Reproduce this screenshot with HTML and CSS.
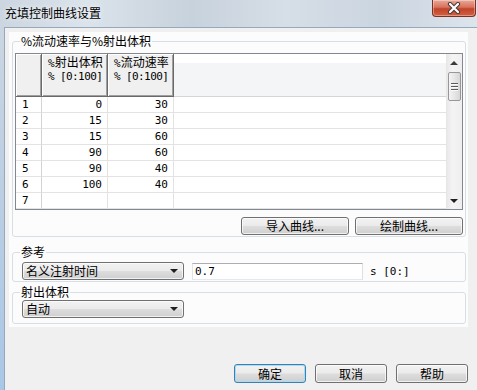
FILE: index.html
```html
<!DOCTYPE html>
<html lang="zh-CN">
<head>
    <meta charset="UTF-8">
    <title>充填控制曲线设置</title>
    <link rel="stylesheet" href="styles.css">
</head>
<body>
    <div class="window">
        <div class="titlebar">
            <span class="title">充填控制曲线设置</span>
            <div class="close">
                <svg width="14" height="12" viewBox="0 0 14 12">
                    <path d="M3 2 L11 10 M11 2 L3 10" stroke="#4a3a38" stroke-width="4.2" stroke-linecap="round"/>
                    <path d="M3 2 L11 10 M11 2 L3 10" stroke="#fff" stroke-width="2.2" stroke-linecap="round"/>
                </svg>
            </div>
        </div>

        <div class="client">
            <div class="panel">
                <fieldset class="group">
                    <legend>%流动速率与%射出体积</legend>
                    <div class="curve-body">
                        <div class="grid-box">
                            <div class="grid">
                                <div class="hdr"></div>
                                <div class="hdr"><span class="hl"><span class="mono">%</span>射出体积</span><span class="hl mono tight">% [0:100]</span></div>
                                <div class="hdr"><span class="hl"><span class="mono">%</span>流动速率</span><span class="hl mono tight">% [0:100]</span></div>
                                <div class="hdr-fill"></div>

                                <div class="cell idx">1</div><div class="cell num">0</div><div class="cell num">30</div><div class="fill"></div>
                                <div class="cell idx">2</div><div class="cell num">15</div><div class="cell num">30</div><div class="fill"></div>
                                <div class="cell idx">3</div><div class="cell num">15</div><div class="cell num">60</div><div class="fill"></div>
                                <div class="cell idx">4</div><div class="cell num">90</div><div class="cell num">60</div><div class="fill"></div>
                                <div class="cell idx">5</div><div class="cell num">90</div><div class="cell num">40</div><div class="fill"></div>
                                <div class="cell idx">6</div><div class="cell num">100</div><div class="cell num">40</div><div class="fill"></div>
                                <div class="cell idx">7</div><div class="cell num"></div><div class="cell num"></div><div class="fill"></div>
                            </div>
                            <div class="vscroll">
                                <div class="sb-btn"><span class="arrow-up"></span></div>
                                <div class="sb-track">
                                    <div class="thumb"><span class="grip"></span></div>
                                </div>
                                <div class="sb-btn"><span class="arrow-down"></span></div>
                            </div>
                        </div>
                        <div class="curve-actions">
                            <button class="btn btn-wide">导入曲线...</button>
                            <button class="btn btn-wide">绘制曲线...</button>
                        </div>
                    </div>
                </fieldset>

                <fieldset class="group group-ref">
                    <legend>参考</legend>
                    <div class="row ref-body">
                        <div class="combo"><span>名义注射时间</span><span class="arrow-down"></span></div>
                        <div class="edit mono">0.7</div>
                        <span class="unit mono">s [0:]</span>
                    </div>
                </fieldset>

                <fieldset class="group group-vol">
                    <legend>射出体积</legend>
                    <div class="row vol-body">
                        <div class="combo"><span>自动</span><span class="arrow-down"></span></div>
                    </div>
                </fieldset>
            </div>

            <div class="actions">
                <button class="btn btn-dlg default">确定</button>
                <button class="btn btn-dlg">取消</button>
                <button class="btn btn-dlg">帮助</button>
            </div>
        </div>
    </div>
</body>
</html>
```

FILE: styles.css
```css
* {
    box-sizing: border-box;
}

body {
    margin: 0;
    width: 477px;
    height: 390px;
    overflow: hidden;
    font-family: "Noto Sans CJK SC", "DejaVu Sans", sans-serif;
    font-size: 12px;
    color: #000;
}

.mono {
    font-family: "DejaVu Sans Mono", "Noto Sans CJK SC", monospace;
    font-size: 11px;
}

.window {
    width: 477px;
    height: 390px;
    display: flex;
    flex-direction: column;
    background: linear-gradient(180deg, #cdd7e1 0%, #bfd0e2 40%, #a9c7e7 100%);
}

/* title bar (glass) */
.titlebar {
    height: 27px;
    flex: none;
    display: flex;
    justify-content: space-between;
    align-items: flex-start;
    background: linear-gradient(90deg, #ccd6e0 0%, #dbe3eb 18%, #c8d2dc 40%, #d6dee7 60%, #cbd5e0 80%, #dce4ec 100%);
}

.title {
    padding: 5px 0 0 5px;
    line-height: 16px;
    text-shadow: 0 0 5px #fff;
}

.close {
    width: 44px;
    height: 17px;
    margin-right: 1px;
    display: flex;
    align-items: center;
    justify-content: center;
    border: 1px solid #7e2f22;
    border-top: none;
    border-radius: 0 0 4px 4px;
    background: linear-gradient(#e9a999 0%, #d7725c 45%, #c3432b 55%, #d0603f 100%);
    box-shadow: inset 0 0 0 1px rgba(255, 255, 255, 0.35);
}

/* client area */
.client {
    flex: 1;
    margin-left: 4px;
    border-top: 1px solid #96a8ba;
    border-left: 1px solid #96a8ba;
    background: #f0f0f0;
    padding: 4px 0 0 4px;
}

.panel {
    width: 459px;
    background: #fcfcfc;
    padding: 2px 2px 3px 3px;
}

.group {
    margin: 0;
    padding: 0;
    min-width: 0;
    border: 1px solid #d5dfe5;
    border-radius: 3px;
}

.group legend {
    margin-left: 7px;
    padding: 0 1px;
    line-height: 14px;
}

.group-ref {
    margin-top: 8px;
}

.group-vol {
    margin-top: 3px;
}

.curve-body {
    padding: 5px 2px 1px 2px;
}

/* data grid */
.grid-box {
    display: flex;
    height: 157px;
    border: 1px solid #828790;
    background: #fff;
}

.grid {
    flex: 1;
    display: grid;
    grid-template-columns: 26px 66px 66px 1fr;
    grid-template-rows: 43px repeat(7, 16px);
}

.hdr {
    background: #f0f0f0;
    border-right: 1px solid #696969;
    border-bottom: 1px solid #696969;
    box-shadow: inset 1px 1px #fff, inset -1px -1px #a0a0a0;
    padding: 1px 0 0 6px;
    line-height: 13px;
    white-space: nowrap;
    overflow: hidden;
}

.hl {
    display: block;
}

.tight {
    letter-spacing: -0.6px;
}

.hdr-fill {
    background: linear-gradient(#fff 0 9px, #f4f5f7 9px);
    border-bottom: 1px solid #d5d5d5;
}

.cell {
    border-right: 1px solid #e3e3e3;
    border-bottom: 1px solid #e3e3e3;
    font-family: "DejaVu Sans Mono", monospace;
    font-size: 11px;
    line-height: 15px;
}

.idx {
    padding-left: 6px;
    border-right-color: #d4d4d4;
}

.num {
    text-align: right;
    padding-right: 5px;
}

.fill {
    border-bottom: 1px solid #e3e3e3;
}

/* scrollbar */
.vscroll {
    width: 16px;
    display: flex;
    flex-direction: column;
    background: linear-gradient(90deg, #e6e6e6, #f4f4f4 40%, #eeeeee);
}

.sb-btn {
    height: 17px;
    display: flex;
    align-items: center;
    justify-content: center;
}

.sb-track {
    flex: 1;
}

.thumb {
    height: 29px;
    margin: 1px 1px 0 2px;
    border: 1px solid #979797;
    border-radius: 2px;
    background: linear-gradient(90deg, #f4f4f4, #e6e6e6 50%, #d6d6d6);
    display: flex;
    align-items: center;
    justify-content: center;
}

.grip {
    width: 7px;
    height: 8px;
    background: repeating-linear-gradient(#5a5a5a 0 1px, #fafafa 1px 2px, transparent 2px 3px);
}

.arrow-up {
    width: 0;
    height: 0;
    border-left: 4px solid transparent;
    border-right: 4px solid transparent;
    border-bottom: 4px solid #3b3b3b;
}

.arrow-down {
    width: 0;
    height: 0;
    border-left: 4px solid transparent;
    border-right: 4px solid transparent;
    border-top: 4px solid #1e1e1e;
}

/* buttons */
.btn {
    font: inherit;
    color: #000;
    padding: 0;
    line-height: 14px;
    border: 1px solid #707070;
    border-radius: 3px;
    background: linear-gradient(#f2f2f2 0%, #ebebeb 48%, #dddddd 52%, #cfcfcf 100%);
    box-shadow: inset 0 0 0 1px rgba(255, 255, 255, 0.7);
}

.curve-actions {
    display: flex;
    justify-content: flex-end;
    gap: 6px;
    margin-top: 7px;
}

.btn-wide {
    width: 108px;
    height: 18px;
}

.actions {
    display: flex;
    justify-content: flex-end;
    gap: 9px;
    margin-top: 37px;
    padding-right: 9px;
}

.btn-dlg {
    width: 72px;
    height: 19px;
}

.default {
    border-color: #3c7fb1;
    box-shadow: inset 0 0 0 1px #a6dcf5;
}

/* reference rows */
.row {
    display: flex;
    align-items: center;
}

.ref-body {
    padding: 3px 0 1px 9px;
}

.vol-body {
    padding: 1px 0 5px 9px;
}

.combo {
    width: 162px;
    height: 18px;
    display: flex;
    align-items: center;
    justify-content: space-between;
    padding: 0 5px 0 3px;
    border: 1px solid #707070;
    border-radius: 3px;
    background: linear-gradient(#f2f2f2 0%, #ebebeb 48%, #dddddd 52%, #cfcfcf 100%);
    box-shadow: inset 0 0 0 1px rgba(255, 255, 255, 0.7);
    line-height: 14px;
}

.edit {
    width: 171px;
    height: 17px;
    margin-left: 8px;
    padding-left: 2px;
    line-height: 15px;
    background: #fff;
    border: 1px solid;
    border-color: #abadb3 #dbdfe6 #e3e9ef #e2e3ea;
}

.unit {
    margin-left: 7px;
}
```
